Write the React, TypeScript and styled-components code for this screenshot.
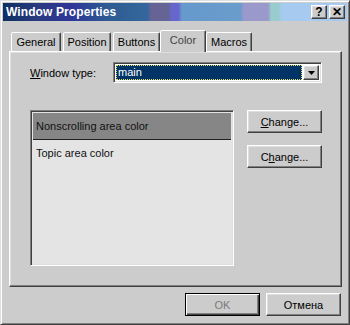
import React from 'react';
import styled, { createGlobalStyle, css } from 'styled-components';

const GlobalStyle = createGlobalStyle`
  html, body {
    margin: 0;
    padding: 0;
    background: #cccccc;
  }
  body {
    font-family: "Liberation Sans", Arial, sans-serif;
    font-size: 11px;
    color: #000;
  }
`;

const raised = css`
  border-style: solid;
  border-width: 1px;
  border-color: #ffffff #404040 #404040 #ffffff;
  box-shadow: inset -1px -1px 0 #808080, inset 1px 1px 0 #dfdfdf;
`;

const sunken = css`
  border-style: solid;
  border-width: 1px;
  border-color: #808080 #ffffff #ffffff #808080;
  box-shadow: inset 1px 1px 0 #404040, inset -1px -1px 0 #dfdfdf;
`;

const Window = styled.div`
  width: 350px;
  height: 325px;
  box-sizing: border-box;
  background: #cccccc;
  border-style: solid;
  border-width: 1px;
  border-color: #dfdfdf #404040 #404040 #dfdfdf;
  box-shadow: inset 1px 1px 0 #ffffff, inset -1px -1px 0 #808080;
  padding: 2px;
  display: flex;
  flex-direction: column;
`;

const TitleBar = styled.div`
  height: 18px;
  display: flex;
  align-items: center;
  padding: 0 2px 0 3px;
  background: linear-gradient(
    to right,
    #0c2f62 0%,
    #2a3a80 10%,
    #2e3699 20%,
    #2d5a92 30%,
    #34679c 42%,
    #656494 43%,
    #656494 48%,
    #6666cc 49%,
    #6666cc 51%,
    #6699cc 52%,
    #6a9ccc 69%,
    #9999cc 70%,
    #9999cc 77%,
    #99cccc 78%,
    #99cccc 80%,
    #a6caf0 81%,
    #a6caf0 100%
  );
`;

const Title = styled.span`
  flex: 1;
  color: #ffffff;
  font-weight: bold;
  font-size: 12px;
  letter-spacing: 0.1px;
`;

const TitleButton = styled.div`
  width: 16px;
  height: 14px;
  box-sizing: border-box;
  background: #cccccc;
  ${raised};
  display: flex;
  align-items: center;
  justify-content: center;
  font-weight: bold;
  font-size: 12px;
  line-height: 1;
  margin-left: 2px;
`;

const Body = styled.div`
  flex: 1;
  display: flex;
  flex-direction: column;
  padding: 9px 5px 0 6px;
`;

const TabRow = styled.div`
  height: 21px;
  display: flex;
  align-items: flex-end;
  padding-left: 2px;
  position: relative;
  z-index: 1;
`;

const Tab = styled.div<{ $active?: boolean; $w: number }>`
  width: ${p => p.$w}px;
  box-sizing: border-box;
  height: ${p => (p.$active ? 22 : 19)}px;
  margin: 0 ${p => (p.$active ? -1 : 1)}px ${p => (p.$active ? -1 : 0)}px;
  border-style: solid;
  border-width: 1px 1px 0 1px;
  border-color: #ffffff #404040 transparent #ffffff;
  border-radius: 2px 2px 0 0;
  box-shadow: inset -1px 0 0 #808080;
  background: #cccccc;
  display: flex;
  justify-content: center;
  padding-top: ${p => (p.$active ? 3 : 3)}px;
  color: ${p => (p.$active ? '#444' : '#000')};
  &:first-child {
    margin-left: 0;
  }
`;

const Panel = styled.div`
  height: 236px;
  box-sizing: border-box;
  ${raised};
  padding: 10px 0 0 20px;
  display: flex;
  flex-direction: column;
`;

const FieldRow = styled.div`
  display: flex;
  align-items: center;
`;

const Label = styled.label`
  width: 83px;
`;

const Underline = styled.span`
  text-decoration: underline;
`;

const Combo = styled.div`
  width: 209px;
  height: 21px;
  box-sizing: border-box;
  ${sunken};
  background: #ffffff;
  display: flex;
  padding: 2px;
`;

const ComboValue = styled.div`
  flex: 1;
  background: #003366;
  color: #ffffff;
  outline: 1px dotted #e8e060;
  outline-offset: -1px;
  padding-left: 2px;
  line-height: 15px;
  margin-right: 1px;
`;

const ComboArrow = styled.div`
  width: 16px;
  box-sizing: border-box;
  background: #cccccc;
  ${raised};
  display: flex;
  align-items: center;
  justify-content: center;
`;

const ColorArea = styled.div`
  display: flex;
  margin-top: 27px;
  gap: 13px;
`;

const ListBox = styled.div`
  width: 204px;
  height: 156px;
  box-sizing: border-box;
  ${sunken};
  background: #e4e4e4;
  padding: 2px;
`;

const ListItem = styled.div<{ $selected?: boolean }>`
  height: ${p => (p.$selected ? 26 : 'auto')};
  background: ${p => (p.$selected ? '#868686' : 'transparent')};
  border-bottom: ${p => (p.$selected ? '1px solid #202020' : 'none')};
  padding: ${p => (p.$selected ? '7px 3px 0' : '7px 3px 0')};
  height: ${p => (p.$selected ? '19px' : 'auto')};
  color: #111;
`;

const ButtonColumn = styled.div`
  display: flex;
  flex-direction: column;
  gap: 12px;
  padding-top: -1px;
`;

const Button = styled.button<{ $default?: boolean }>`
  width: 75px;
  height: 23px;
  box-sizing: border-box;
  background: #cccccc;
  font-family: inherit;
  font-size: 11px;
  color: ${p => (p.$default ? '#7a7a7a' : '#000')};
  padding: 0;
  ${p =>
    p.$default
      ? css`
          border: 1px solid #000;
          box-shadow: inset 1px 1px 0 #ffffff, inset -1px -1px 0 #404040,
            inset -2px -2px 0 #808080;
        `
      : raised};
`;

const Footer = styled.div`
  display: flex;
  justify-content: flex-end;
  gap: 6px;
  margin-top: 6px;
  margin-right: 1px;
`;

const Arrow = () => (
  <svg width="7" height="4" viewBox="0 0 7 4">
    <path d="M0 0h7L3.5 4z" fill="#000" />
  </svg>
);

export default function App() {
  return (
    <>
      <GlobalStyle />
      <Window>
        <TitleBar>
          <Title>Window Properties</Title>
          <TitleButton>?</TitleButton>
          <TitleButton>✕</TitleButton>
        </TitleBar>
        <Body>
          <TabRow>
            <Tab $w={50}>General</Tab>
            <Tab $w={48}>Position</Tab>
            <Tab $w={47}>Buttons</Tab>
            <Tab $w={46} $active>Color</Tab>
            <Tab $w={46}>Macros</Tab>
          </TabRow>
          <Panel>
            <FieldRow>
              <Label>
                <Underline>W</Underline>indow type:
              </Label>
              <Combo>
                <ComboValue>main</ComboValue>
                <ComboArrow>
                  <Arrow />
                </ComboArrow>
              </Combo>
            </FieldRow>
            <ColorArea>
              <ListBox>
                <ListItem $selected>Nonscrolling area color</ListItem>
                <ListItem>Topic area color</ListItem>
              </ListBox>
              <ButtonColumn>
                <Button>
                  <Underline>C</Underline>hange...
                </Button>
                <Button>
                  C<Underline>h</Underline>ange...
                </Button>
              </ButtonColumn>
            </ColorArea>
          </Panel>
          <Footer>
            <Button $default>OK</Button>
            <Button>Отмена</Button>
          </Footer>
        </Body>
      </Window>
    </>
  );
}
